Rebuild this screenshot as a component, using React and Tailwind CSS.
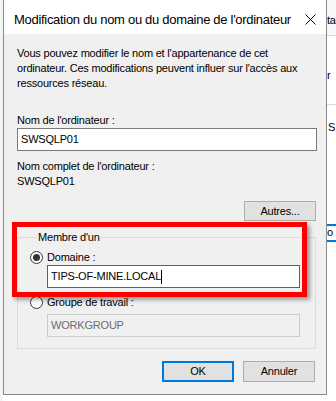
import React from 'react';

const Radio = ({ checked }) => (
  <span className="w-[13px] h-[13px] rounded-full border border-[#333] bg-white flex items-center justify-center shrink-0">
    {checked && <span className="w-[7px] h-[7px] rounded-full bg-[#333]" />}
  </span>
);

const Button = ({ children, primary }) => (
  <button
    className={
      primary
        ? 'w-[72px] h-[21px] bg-[#e1e1e1] border-2 border-[#0078d7] leading-none'
        : 'w-[72px] h-[21px] bg-[#e1e1e1] border border-[#adadad] leading-none'
    }
  >
    {children}
  </button>
);

const BackWindow = () => (
  <div className="flex-1 h-full bg-white overflow-hidden flex flex-col text-[11px] text-black whitespace-nowrap">
    <div className="h-[36px] bg-[#f7f7f7] border-b border-[#d9d9d9] flex items-center pt-[6px]">
      <span>ta</span>
    </div>
    <div className="h-[69px] border-b border-[#d9d9d9] flex items-start pt-[31px]">
      <span>r</span>
    </div>
    <div className="pt-[14px] pl-[1px]">
      <span>S</span>
    </div>
    <div className="mt-[88px] h-[18px] border-y-2 border-[#0078d7] flex items-center">
      <span>o</span>
    </div>
  </div>
);

export default function App() {
  return (
    <div className="relative w-[336px] h-[401px] bg-white flex font-['Liberation_Sans',Arial,sans-serif] text-[11px] tracking-[-0.2px] text-black">
      <div className="w-[3px] h-full bg-[#f4f4f4]" />
      <div className="w-[324px] h-[395px] border-x border-b border-[#8a8a8a] flex flex-col">
        <div className="h-[34px] bg-white flex items-center justify-between pl-[10px] pr-[10px] pt-[5px]">
          <span className="text-[13px] tracking-[-0.3px]">Modification du nom ou du domaine de l'ordinateur</span>
          <svg width="11" height="11" viewBox="0 0 11 11" className="shrink-0">
            <path d="M0.5 0.5 L10.5 10.5 M10.5 0.5 L0.5 10.5" stroke="#000" strokeWidth="1" />
          </svg>
        </div>
        <div className="flex-1 bg-[#f0f0f0] pl-[13px] pr-[9px] flex flex-col leading-[15px]">
          <p className="mt-[12px]">
            Vous pouvez modifier le nom et l'appartenance de cet
            <br />
            ordinateur. Ces modifications peuvent influer sur l'accès aux
            <br />
            ressources réseau.
          </p>
          <div className="mt-[22px]">Nom de l'ordinateur :</div>
          <div className="h-[23px] bg-white border border-[#7a7a7a] flex items-center px-[3px]">SWSQLP01</div>
          <div className="mt-[8px]">Nom complet de l'ordinateur :</div>
          <div>SWSQLP01</div>
          <div className="mt-[12px] flex justify-end pr-[1px]">
            <button className="w-[72px] h-[20px] bg-[#e1e1e1] border border-[#adadad] leading-none">Autres...</button>
          </div>
          <fieldset className="mt-[9px] mr-[1px] border border-[#dcdcdc] pl-[12px] pb-[11px]">
            <legend className="ml-[7px] px-[1px]">Membre d'un</legend>
            <label className="mt-[5px] flex items-center gap-[4px]">
              <Radio checked />
              <span>Domaine :</span>
            </label>
            <div className="ml-[17px] w-[253px] h-[23px] bg-white border border-[#0078d7] flex items-center px-[3px]">
              TIPS-OF-MINE.LOCAL<span className="w-px h-[14px] bg-black" />
            </div>
            <label className="mt-[7px] flex items-center gap-[4px]">
              <Radio />
              <span>Groupe de travail :</span>
            </label>
            <div className="mt-[4px] ml-[17px] w-[253px] h-[23px] bg-[#f0f0f0] border border-[#cccccc] flex items-center px-[3px] text-[#6d6d6d]">
              WORKGROUP
            </div>
          </fieldset>
          <div className="mt-[12px] flex justify-end gap-[9px] pr-[2px]">
            <Button primary>OK</Button>
            <Button>Annuler</Button>
          </div>
        </div>
      </div>
      <BackWindow />
      <div className="absolute left-[12px] top-[222px] w-[295px] h-[75px] border-[5px] border-[#ff0000] shadow-[3px_3px_4px_rgba(0,0,0,0.35)]" />
    </div>
  );
}
